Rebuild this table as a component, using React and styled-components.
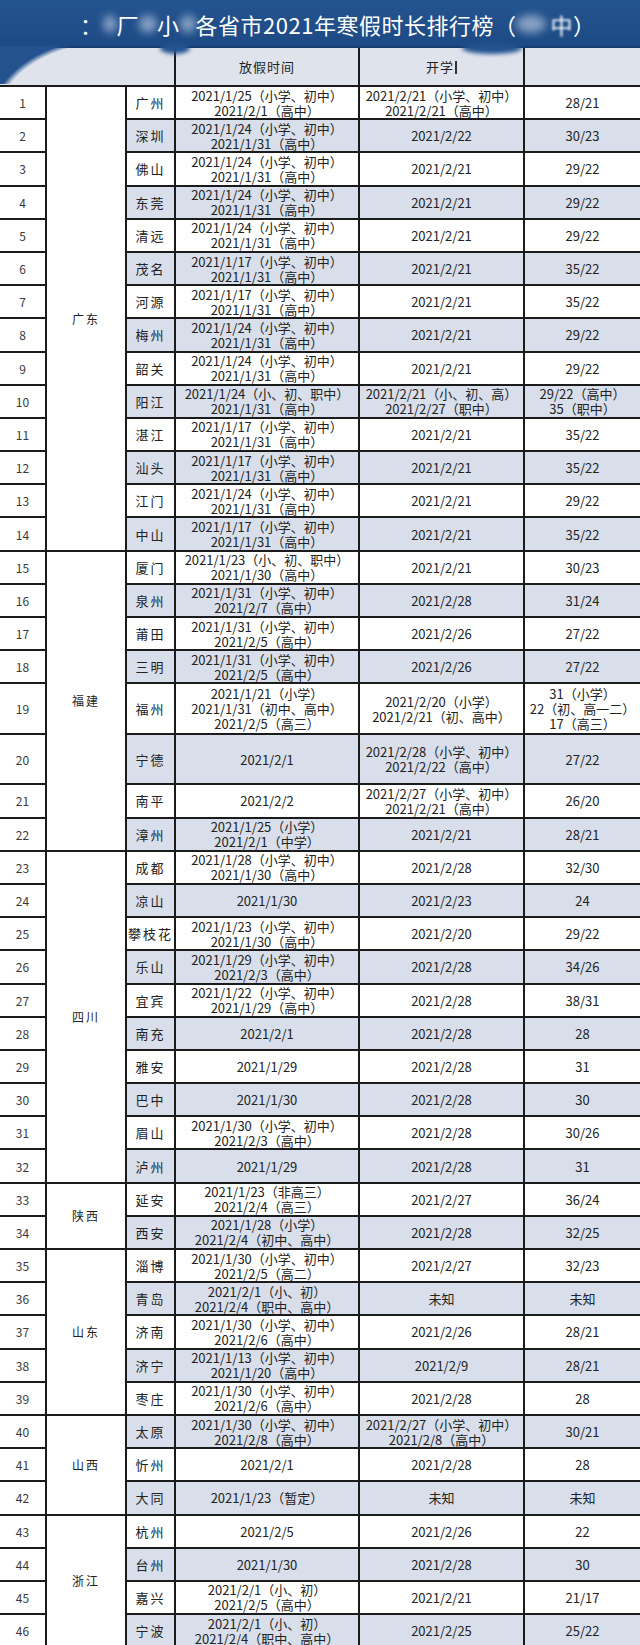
import React from 'react'
import styled, { createGlobalStyle } from 'styled-components'

const GlobalStyle = createGlobalStyle`
  body {
    margin: 0;
    background: #fff;
    font-family: "Noto Sans CJK SC", "Noto Sans", sans-serif;
  }
`

const A = '2021/1/24（小学、初中）\n2021/1/31（高中）'
const B = '2021/1/17（小学、初中）\n2021/1/31（高中）'

// [city, 放假时间, 开学时间, 天数]
const rows = [
  ['广州', '2021/1/25（小学、初中）\n2021/2/1（高中）', '2021/2/21（小学、初中）\n2021/2/21（高中）', '28/21'],
  ['深圳', A, '2021/2/22', '30/23'],
  ['佛山', A, '2021/2/21', '29/22'],
  ['东莞', A, '2021/2/21', '29/22'],
  ['清远', A, '2021/2/21', '29/22'],
  ['茂名', B, '2021/2/21', '35/22'],
  ['河源', B, '2021/2/21', '35/22'],
  ['梅州', A, '2021/2/21', '29/22'],
  ['韶关', A, '2021/2/21', '29/22'],
  ['阳江', '2021/1/24（小、初、职中）\n2021/1/31（高中）', '2021/2/21（小、初、高）\n2021/2/27（职中）', '29/22（高中）\n35（职中）'],
  ['湛江', B, '2021/2/21', '35/22'],
  ['汕头', B, '2021/2/21', '35/22'],
  ['江门', A, '2021/2/21', '29/22'],
  ['中山', B, '2021/2/21', '35/22'],
  ['厦门', '2021/1/23（小、初、职中）\n2021/1/30（高中）', '2021/2/21', '30/23'],
  ['泉州', '2021/1/31（小学、初中）\n2021/2/7（高中）', '2021/2/28', '31/24'],
  ['莆田', '2021/1/31（小学、初中）\n2021/2/5（高中）', '2021/2/26', '27/22'],
  ['三明', '2021/1/31（小学、初中）\n2021/2/5（高中）', '2021/2/26', '27/22'],
  ['福州', '2021/1/21（小学）\n2021/1/31（初中、高中）\n2021/2/5（高三）', '2021/2/20（小学）\n2021/2/21（初、高中）', '31（小学）\n22（初、高一二）\n17（高三）'],
  ['宁德', '2021/2/1', '2021/2/28（小学、初中）\n2021/2/22（高中）', '27/22'],
  ['南平', '2021/2/2', '2021/2/27（小学、初中）\n2021/2/21（高中）', '26/20'],
  ['漳州', '2021/1/25（小学）\n2021/2/1（中学）', '2021/2/21', '28/21'],
  ['成都', '2021/1/28（小学、初中）\n2021/1/30（高中）', '2021/2/28', '32/30'],
  ['凉山', '2021/1/30', '2021/2/23', '24'],
  ['攀枝花', '2021/1/23（小学、初中）\n2021/1/30（高中）', '2021/2/20', '29/22'],
  ['乐山', '2021/1/29（小学、初中）\n2021/2/3（高中）', '2021/2/28', '34/26'],
  ['宜宾', '2021/1/22（小学、初中）\n2021/1/29（高中）', '2021/2/28', '38/31'],
  ['南充', '2021/2/1', '2021/2/28', '28'],
  ['雅安', '2021/1/29', '2021/2/28', '31'],
  ['巴中', '2021/1/30', '2021/2/28', '30'],
  ['眉山', '2021/1/30（小学、初中）\n2021/2/3（高中）', '2021/2/28', '30/26'],
  ['泸州', '2021/1/29', '2021/2/28', '31'],
  ['延安', '2021/1/23（非高三）\n2021/2/4（高三）', '2021/2/27', '36/24'],
  ['西安', '2021/1/28（小学）\n2021/2/4（初中、高中）', '2021/2/28', '32/25'],
  ['淄博', '2021/1/30（小学、初中）\n2021/2/5（高二）', '2021/2/27', '32/23'],
  ['青岛', '2021/2/1（小、初）\n2021/2/4（职中、高中）', '未知', '未知'],
  ['济南', '2021/1/30（小学、初中）\n2021/2/6（高中）', '2021/2/26', '28/21'],
  ['济宁', '2021/1/13（小学、初中）\n2021/1/20（高中）', '2021/2/9', '28/21'],
  ['枣庄', '2021/1/30（小学、初中）\n2021/2/6（高中）', '2021/2/28', '28'],
  ['太原', '2021/1/30（小学、初中）\n2021/2/8（高中）', '2021/2/27（小学、初中）\n2021/2/8（高中）', '30/21'],
  ['忻州', '2021/2/1', '2021/2/28', '28'],
  ['大同', '2021/1/23（暂定）', '未知', '未知'],
  ['杭州', '2021/2/5', '2021/2/26', '22'],
  ['台州', '2021/1/30', '2021/2/28', '30'],
  ['嘉兴', '2021/2/1（小、初）\n2021/2/5（高中）', '2021/2/21', '21/17'],
  ['宁波', '2021/2/1（小、初）\n2021/2/4（职中、高中）', '2021/2/25', '25/22'],
]

const provinces = {
  1: ['广东', 14],
  15: ['福建', 8],
  23: ['四川', 10],
  33: ['陕西', 2],
  35: ['山东', 5],
  40: ['山西', 3],
  43: ['浙江', 4],
}

const tallRows = [19, 20]

export default function App() {
  return (
    <Page>
      <GlobalStyle />
      <TitleBar>
        <Title>
          <span>：</span>
          <Smudge $w={14} />
          <span>厂</span>
          <Smudge $w={18} />
          <span>小</span>
          <Smudge $w={16} />
          <span>各省市2021年寒假时长排行榜（</span>
          <Smudge $w={30} />
          <SoftChar>中</SoftChar>
          <span>）</span>
        </Title>
      </TitleBar>

      <Table>
        <colgroup>
          <col style={{ width: 46 }} />
          <col style={{ width: 80 }} />
          <col style={{ width: 49 }} />
          <col style={{ width: 184 }} />
          <col style={{ width: 165 }} />
          <col style={{ width: 116 }} />
        </colgroup>
        <thead>
          <HeadRow>
            <HeadCell $blank />
            <HeadCell $blank />
            <HeadCell $blank />
            <HeadCell>放假时间</HeadCell>
            <HeadCell>
              开学<HeadCut />
            </HeadCell>
            <HeadCell $last />
          </HeadRow>
        </thead>
        <tbody>
          {rows.map(([city, off, start, days], i) => {
            const n = i + 1
            const shaded = n % 2 === 0
            const province = provinces[n]
            return (
              <Row key={n} $tall={tallRows.includes(n)}>
                <IndexCell>{n}</IndexCell>
                {province && (
                  <ProvinceCell rowSpan={province[1]}>{province[0]}</ProvinceCell>
                )}
                <CityCell $shaded={shaded}>{city}</CityCell>
                <DataCell $shaded={shaded}>{off}</DataCell>
                <DataCell $shaded={shaded}>{start}</DataCell>
                <DataCell $shaded={shaded} $last>
                  {days}
                </DataCell>
              </Row>
            )
          })}
        </tbody>
      </Table>

      <Swoosh />
      <Drip $x={160} $w={30} />
      <Drip $x={462} $w={60} />
    </Page>
  )
}

const Page = styled.div`
  position: relative;
  width: 640px;
  overflow: hidden;
`

const TitleBar = styled.div`
  height: 44px;
  padding-top: 2px;
  background: linear-gradient(#24548f, #1d4a85);
  border-bottom: 2px solid #173c6e;
  display: flex;
  align-items: center;
`

const Title = styled.h1`
  margin: 0;
  padding-left: 80px;
  display: flex;
  align-items: center;
  color: #fff;
  font-size: 22px;
  font-weight: 400;
  letter-spacing: 0.5px;
  white-space: nowrap;
`

const Smudge = styled.span`
  display: inline-block;
  width: ${p => p.$w}px;
  height: 18px;
  border-radius: 50%;
  background: rgba(220, 230, 245, 0.55);
  filter: blur(4px);
`

const SoftChar = styled.span`
  filter: blur(0.8px);
  margin-left: 4px;
`

const Table = styled.table`
  width: 640px;
  border-collapse: collapse;
  table-layout: fixed;
`

const HeadRow = styled.tr`
  height: 38px;
  background: #dfe3ec;
`

const HeadCell = styled.th`
  padding: 0;
  font-size: 13px;
  font-weight: 400;
  color: #222;
  letter-spacing: 1px;
  text-align: center;
  border-left: ${p => (p.$blank ? 'none' : '2px solid #1b1b1b')};
  border-bottom: 2px solid #1b1b1b;
`

const HeadCut = styled.span`
  display: inline-block;
  width: 2px;
  height: 13px;
  margin-left: 1px;
  vertical-align: -2px;
  background: #333;
`

const Row = styled.tr`
  height: ${p => (p.$tall ? 50.5 : 33.2)}px;
`

const Cell = styled.td`
  padding: 0;
  border: 2px solid #1b1b1b;
  text-align: center;
  vertical-align: middle;
  color: #222;
  white-space: pre-line;
`

const IndexCell = styled(Cell)`
  border-left: none;
  background: #fff;
  font-size: 12px;
  color: #3a3a3a;
`

const ProvinceCell = styled(Cell)`
  background: #fff;
  font-size: 12px;
  letter-spacing: 2px;
`

const CityCell = styled(Cell)`
  background: ${p => (p.$shaded ? '#d8deea' : '#fff')};
  font-size: 13px;
  letter-spacing: 2px;
`

const DataCell = styled(Cell)`
  background: ${p => (p.$shaded ? '#d8deea' : '#fff')};
  font-size: 13px;
  line-height: 15px;
  border-right: ${p => (p.$last ? 'none' : '2px solid #1b1b1b')};
`

const Swoosh = styled.div`
  position: absolute;
  left: 0;
  top: 46px;
  width: 110px;
  height: 38px;
  background: radial-gradient(
    ellipse 120px 83px at 110px 75px,
    transparent 94%,
    #23528f 100%
  );
  pointer-events: none;
`

const Drip = styled.div`
  position: absolute;
  top: 42px;
  left: ${p => p.$x}px;
  width: ${p => p.$w}px;
  height: 12px;
  border-radius: 50%;
  background: #23528f;
  filter: blur(2px);
  pointer-events: none;
`
